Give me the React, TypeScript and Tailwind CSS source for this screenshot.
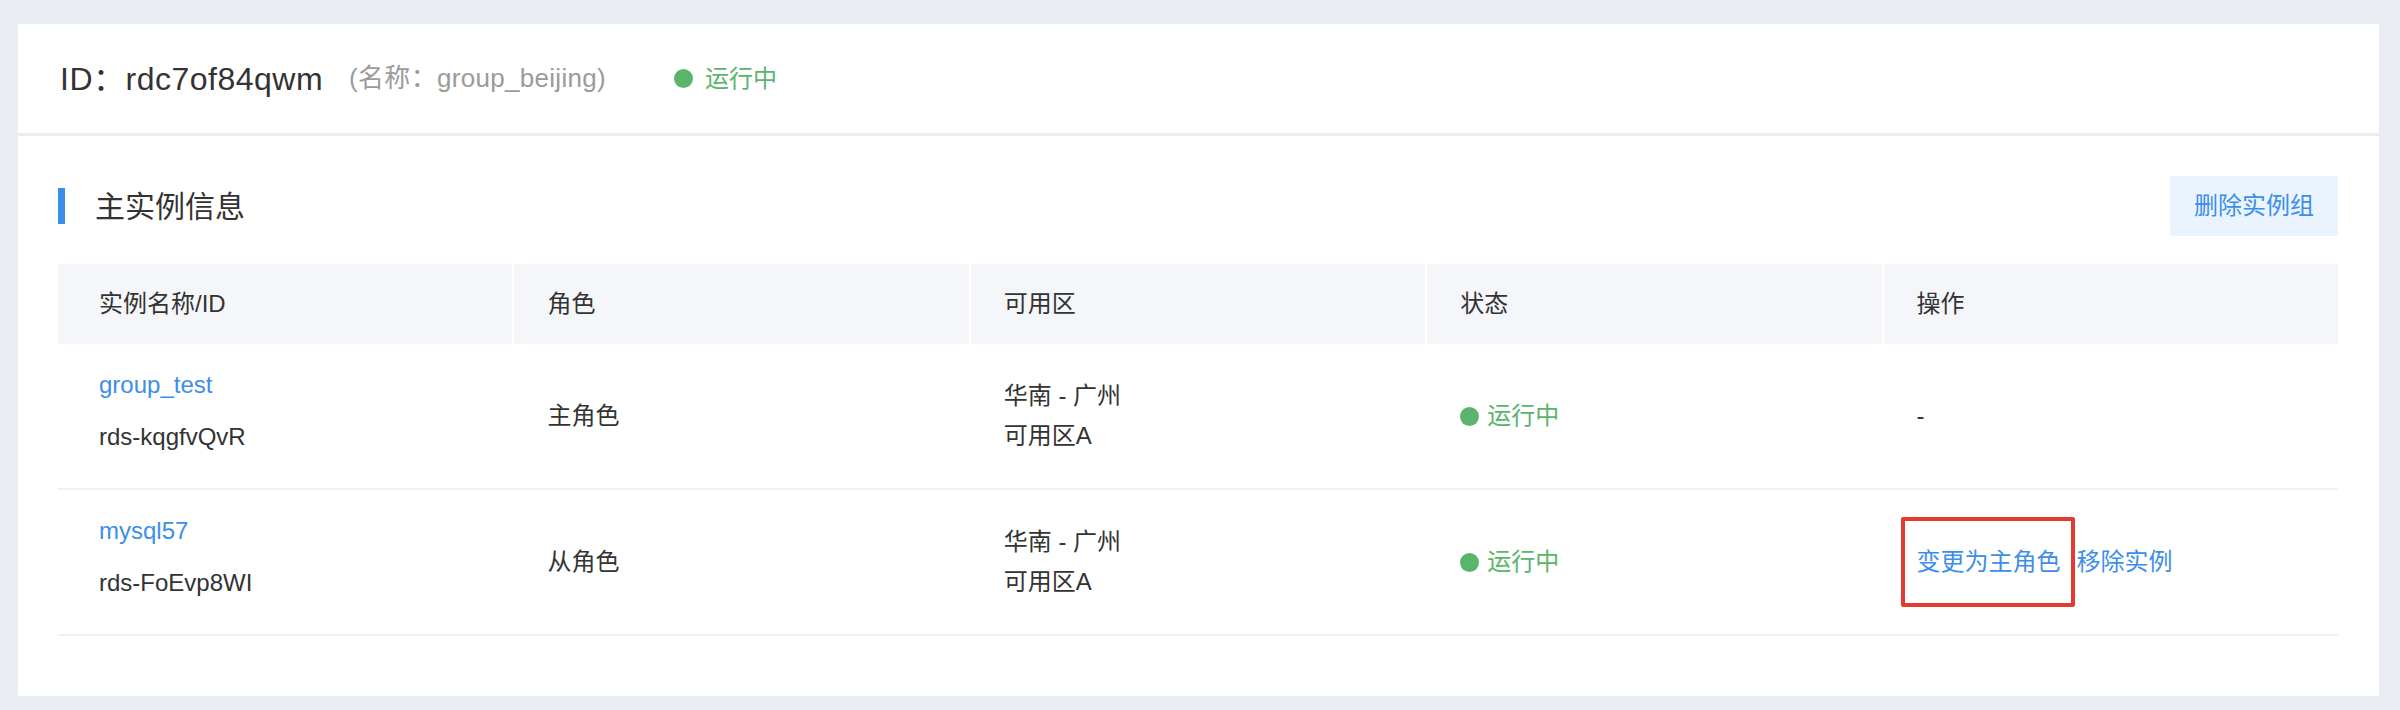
import React from 'react';

const font = "font-['Liberation_Sans','Noto_Sans_CJK_SC',sans-serif]";

const columns = ['实例名称/ID', '角色', '可用区', '状态', '操作'];

const rows = [
  { name: 'group_test', id: 'rds-kqgfvQvR', role: '主角色', master: true },
  { name: 'mysql57', id: 'rds-FoEvp8WI', role: '从角色', master: false },
];

function Status({ big }: { big?: boolean }) {
  return (
    <div className={`flex items-center ${big ? 'gap-3' : 'gap-2'}`}>
      <span className="w-[19px] h-[19px] rounded-full bg-[#5bb46b]" />
      <span className="text-[24px] text-[#5bb46b]">运行中</span>
    </div>
  );
}

export default function App() {
  return (
    <div className={`${font} bg-[#e9ecf0] h-[710px] pt-[24px] pl-[18px] pr-[21px] text-[#333]`}>
      {/* top header */}
      <div className="bg-white h-[109px] pl-[42px] flex items-center">
        <span className="text-[32px] tracking-[0.5px]">ID：rdc7of84qwm</span>
        <span className="ml-[26px] text-[26px] text-[#9b9b9b] tracking-[0.3px]">(名称：group_beijing)</span>
        <span className="ml-[68px]">
          <Status big />
        </span>
      </div>

      <div className="bg-white mt-[3px] h-[560px] pt-[40px] pl-[40px] pr-[41px]">
        <div className="flex items-center justify-between h-[60px]">
          <div className="flex items-center">
            <span className="w-[7px] h-[36px] bg-[#3d8ee8]" />
            <span className="ml-[30px] text-[30px]">主实例信息</span>
          </div>
          <button className="w-[168px] h-[60px] bg-[#eaf4fe] text-[#3d8ee8] text-[24px]">删除实例组</button>
        </div>

        <div className="mt-[28px]">
          <div className="grid grid-cols-5 h-[80px] bg-white gap-x-[2px]">
            {columns.map((c, i) => (
              <div
                key={c}
                className={`bg-[#f5f6fa] flex items-center text-[24px] text-[#333] ${i === 0 ? 'pl-[41px]' : 'pl-[33px]'}`}
              >
                {c}
              </div>
            ))}
          </div>

          {rows.map(r => (
            <div key={r.id} className="grid grid-cols-5 gap-x-[2px] h-[146px] border-b-2 border-[#edf0f5] text-[24px]">
              <div className="pl-[41px] flex flex-col justify-center pb-[10px] leading-[36px] gap-[16px]">
                <span className="text-[#3d8ee8]">{r.name}</span>
                <span>{r.id}</span>
              </div>
              <div className="pl-[33px] flex items-center">{r.role}</div>
              <div className="pl-[33px] flex flex-col justify-center leading-[40px]">
                <span>华南 - 广州</span>
                <span>可用区A</span>
              </div>
              <div className="pl-[33px] flex items-center">
                <Status />
              </div>
              <div className="pl-[33px] flex items-center">
                {r.master ? (
                  <span>-</span>
                ) : (
                  <div className="flex items-center text-[#3d8ee8]">
                    <span className="relative">
                      变更为主角色
                      <span className="absolute -left-[16px] -right-[14px] -top-[27px] -bottom-[27px] border-[4px] border-[#e33b30] rounded-[2px]" />
                    </span>
                    <span className="ml-[16px]">移除实例</span>
                  </div>
                )}
              </div>
            </div>
          ))}
        </div>
      </div>
    </div>
  );
}
